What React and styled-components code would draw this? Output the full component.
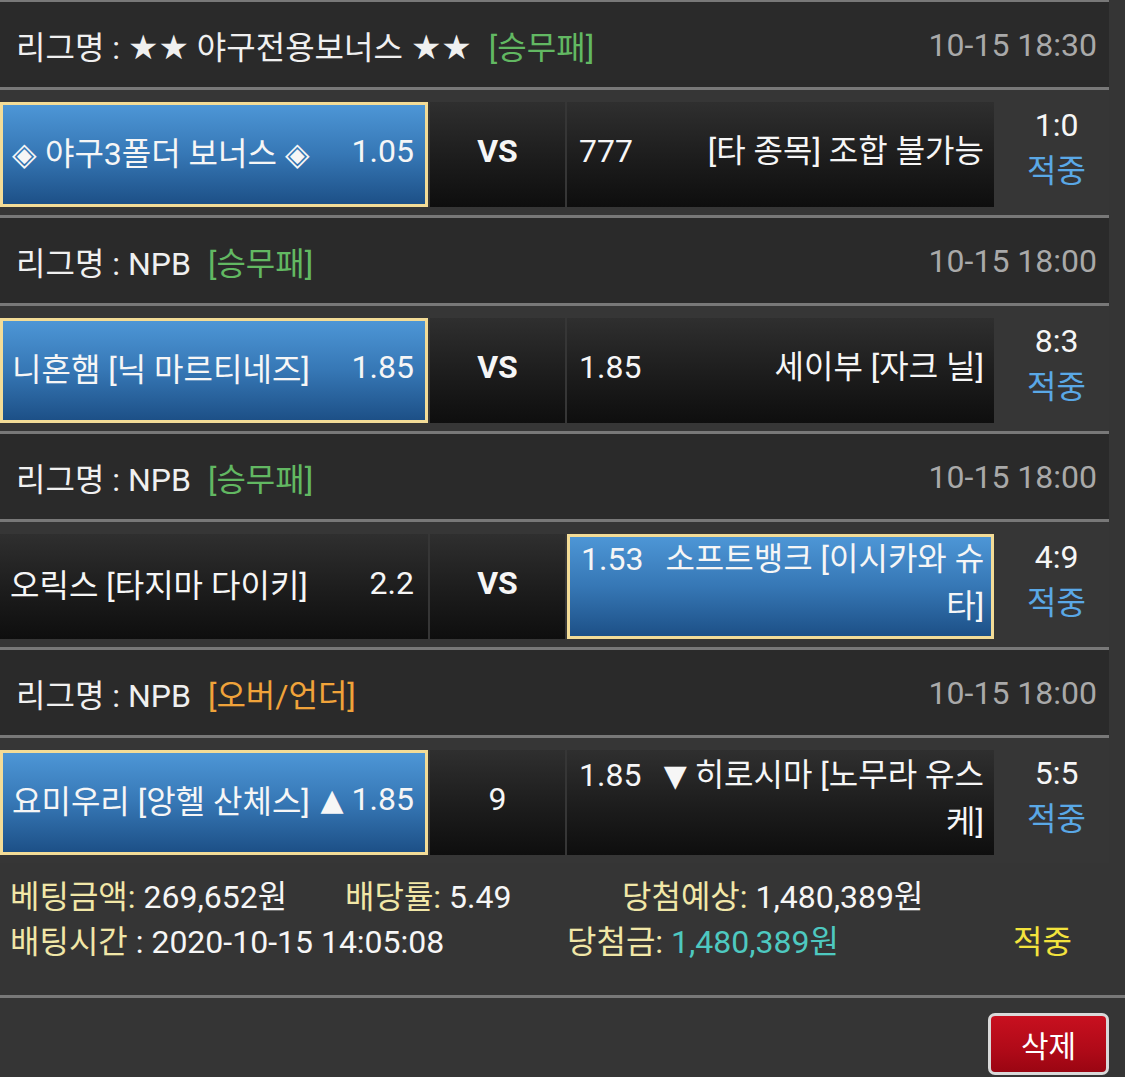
import React from 'react';
import styled, { createGlobalStyle } from 'styled-components';

const GlobalStyle = createGlobalStyle`
    html, body {
        margin: 0;
        padding: 0;
        background: #353535;
    }
    body {
        font-family: Roboto, "Noto Sans CJK KR", sans-serif;
        color: #f2f2f2;
    }
`;

const matches = [
    {
        league: '★★ 야구전용보너스 ★★',
        type: '[승무패]',
        typeColor: '#62b862',
        date: '10-15 18:30',
        home: { name: '◈ 야구3폴더 보너스 ◈', odds: '1.05', picked: true },
        middle: { text: 'VS', bold: true },
        away: { odds: '777', name: ['[타 종목] 조합 불가능'], picked: false },
        score: '1:0',
    },
    {
        league: 'NPB',
        type: '[승무패]',
        typeColor: '#62b862',
        date: '10-15 18:00',
        home: { name: '니혼햄 [닉 마르티네즈]', odds: '1.85', picked: true },
        middle: { text: 'VS', bold: true },
        away: { odds: '1.85', name: ['세이부 [자크 닐]'], picked: false },
        score: '8:3',
    },
    {
        league: 'NPB',
        type: '[승무패]',
        typeColor: '#62b862',
        date: '10-15 18:00',
        home: { name: '오릭스 [타지마 다이키]', odds: '2.2', picked: false },
        middle: { text: 'VS', bold: true },
        away: { odds: '1.53', name: ['소프트뱅크 [이시카와 슈', '타]'], picked: true },
        score: '4:9',
    },
    {
        league: 'NPB',
        type: '[오버/언더]',
        typeColor: '#f0a33a',
        date: '10-15 18:00',
        home: { name: '요미우리 [앙헬 산체스]', odds: '▲ 1.85', picked: true },
        middle: { text: '9', bold: false },
        away: { odds: '1.85', name: ['▼ 히로시마 [노무라 유스', '케]'], picked: false },
        score: '5:5',
    },
];

// stars and arrows come out too wide in the CJK font, so give them their own
const withSymbols = (text) =>
    text.split(/([★▲▼]+)/).map((part, i) =>
        /[★▲▼]/.test(part) ? (
            <Sym key={i} $star={part.includes('★')}>
                {part}
            </Sym>
        ) : (
            part
        )
    );

const App = () => {
    return (
        <>
            <GlobalStyle />
            <Page>
                <List>
                    {matches.map((m, i) => (
                        <Group key={i} $first={i === 0}>
                            <LeagueBar>
                                <LeagueName>
                                    리그명 : {withSymbols(m.league)}
                                    <BetType $color={m.typeColor}>{m.type}</BetType>
                                </LeagueName>
                                <MatchDate>{m.date}</MatchDate>
                            </LeagueBar>
                            <MatchRow>
                                <HomeCell $picked={m.home.picked}>
                                    <TeamName>{m.home.name}</TeamName>
                                    <Odds>{withSymbols(m.home.odds)}</Odds>
                                </HomeCell>
                                <MiddleCell $bold={m.middle.bold}>{m.middle.text}</MiddleCell>
                                <AwayCell $picked={m.away.picked}>
                                    <AwayInner>
                                        <Odds>{m.away.odds}</Odds>
                                        <AwayName>
                                            {m.away.name.map((part, j) => (
                                                <React.Fragment key={j}>
                                                    {j > 0 && <br />}
                                                    {withSymbols(part)}
                                                </React.Fragment>
                                            ))}
                                        </AwayName>
                                    </AwayInner>
                                </AwayCell>
                                <ResultCell>
                                    <Score>{m.score}</Score>
                                    <Hit>적중</Hit>
                                </ResultCell>
                            </MatchRow>
                        </Group>
                    ))}
                    <Summary>
                        <SummaryLine>
                            <SummaryItem $w={335}>
                                <Label>베팅금액:</Label> 269,652원
                            </SummaryItem>
                            <SummaryItem $w={277}>
                                <Label>배당률:</Label> 5.49
                            </SummaryItem>
                            <SummaryItem>
                                <Label>당첨예상:</Label> 1,480,389원
                            </SummaryItem>
                        </SummaryLine>
                        <SummaryLine>
                            <SummaryItem $w={557}>
                                <Label>배팅시간</Label> : 2020-10-15 14:05:08
                            </SummaryItem>
                            <SummaryItem $w={446}>
                                <Label>당첨금:</Label> <Prize>1,480,389원</Prize>
                            </SummaryItem>
                            <SummaryItem>
                                <Status>적중</Status>
                            </SummaryItem>
                        </SummaryLine>
                    </Summary>
                </List>
                <Footer>
                    <DeleteButton type="button">삭제</DeleteButton>
                </Footer>
            </Page>
        </>
    );
};

export default App;

const Page = styled.div`
    width: 1125px;
    min-height: 1077px;
    background: #353535;
    font-size: 32px;
`;

const List = styled.div`
    width: 1109px;
`;

const Group = styled.div`
    border-top: ${(p) => (p.$first ? '2px' : '3px')} solid #787878;
`;

const LeagueBar = styled.div`
    height: 88px;
    box-sizing: border-box;
    padding: 1px 12px 0 16px;
    display: flex;
    align-items: center;
    justify-content: space-between;
    background: #2a2a2a;
    border-bottom: 3px solid #787878;
`;

const LeagueName = styled.div`
    color: #f0f0f0;
    white-space: nowrap;
`;

const Sym = styled.span`
    font-family: "DejaVu Sans", sans-serif;
    font-size: ${(p) => (p.$star ? '34px' : '30px')};
    line-height: 1;
`;

const BetType = styled.span`
    color: ${(p) => p.$color};
    margin-left: 17px;
`;

const MatchDate = styled.div`
    color: #a9a9a9;
`;

const MatchRow = styled.div`
    display: grid;
    grid-template-columns: 428px 135px 427px 1fr;
    column-gap: 2px;
    padding: 12px 0 8px;
    height: 125px;
    box-sizing: border-box;
    background: #363636;
`;

const Cell = styled.div`
    box-sizing: border-box;
    height: 105px;
    display: flex;
    align-items: center;
    padding-bottom: 7px;
    color: #f6f6f6;
    background: ${(p) =>
        p.$picked
            ? 'linear-gradient(to bottom, #4d96d6 0%, #3677b5 50%, #1d5087 100%)'
            : 'linear-gradient(to bottom, #2f2f2f 0%, #1c1c1c 55%, #0e0e0e 100%)'};
    border: ${(p) => (p.$picked ? '3px solid #f3dc97' : 'none')};
`;

const HomeCell = styled(Cell)`
    justify-content: space-between;
    padding-left: ${(p) => (p.$picked ? '9px' : '10px')};
    padding-right: ${(p) => (p.$picked ? '11px' : '14px')};
    white-space: nowrap;
`;

const TeamName = styled.span``;

const Odds = styled.span`
    white-space: nowrap;
`;

const MiddleCell = styled(Cell)`
    justify-content: center;
    font-weight: ${(p) => (p.$bold ? 700 : 400)};
`;

const AwayCell = styled(Cell)`
    padding-left: ${(p) => (p.$picked ? '11px' : '12px')};
    padding-right: ${(p) => (p.$picked ? '8px' : '10px')};
`;

const AwayInner = styled.div`
    display: flex;
    align-items: flex-start;
    width: 100%;
    line-height: 47px;
`;

const AwayName = styled.div`
    flex: 1;
    text-align: right;
    margin-left: 22px;
    white-space: nowrap;
`;

const ResultCell = styled.div`
    display: flex;
    flex-direction: column;
    align-items: center;
    justify-content: center;
    padding: 0 0 18px 8px;
    line-height: 46px;
`;

const Score = styled.div`
    color: #f6f6f6;
`;

const Hit = styled.div`
    color: #5aa8e6;
`;

const Summary = styled.div`
    height: 132px;
    box-sizing: border-box;
    padding: 12px 0 0 10px;
    line-height: 45px;
`;

const SummaryLine = styled.div`
    display: flex;
    white-space: nowrap;
`;

const SummaryItem = styled.div`
    width: ${(p) => (p.$w ? `${p.$w}px` : 'auto')};
    flex-shrink: 0;
    color: #f6f6f6;
`;

const Label = styled.span`
    color: #f1e7a7;
`;

const Prize = styled.span`
    color: #4ec9c0;
`;

const Status = styled.span`
    color: #f3e33d;
`;

const Footer = styled.div`
    border-top: 3px solid #787878;
    width: 1125px;
    box-sizing: border-box;
    padding: 15px 16px 0 0;
    display: flex;
    justify-content: flex-end;
`;

const DeleteButton = styled.button`
    width: 121px;
    height: 62px;
    border: 3px solid #d9d9d9;
    border-radius: 7px;
    background: linear-gradient(to bottom, #c8101f 0%, #b00a18 60%, #9a0512 100%);
    color: #ffffff;
    font-family: Roboto, "Noto Sans CJK KR", sans-serif;
    font-size: 30px;
    padding: 0;
`;
